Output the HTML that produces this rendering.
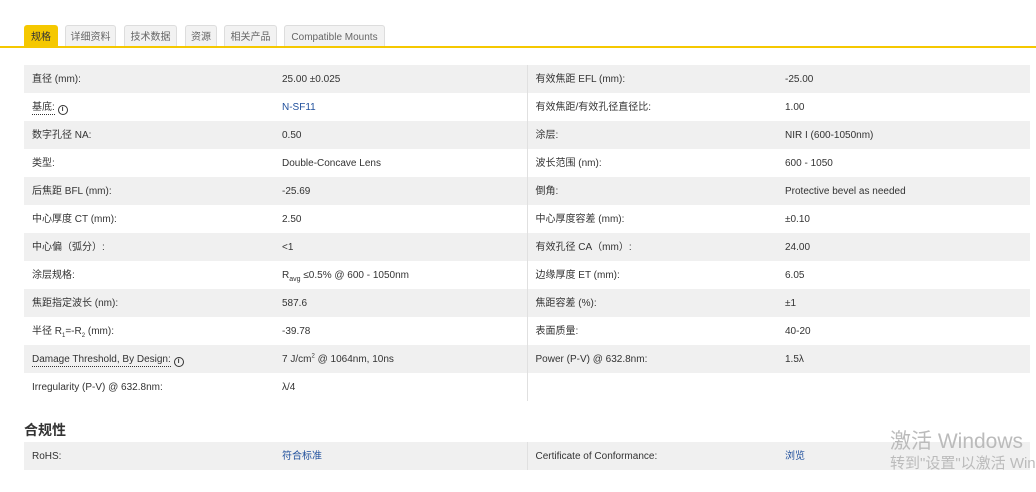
<!DOCTYPE html>
<html><head><meta charset="utf-8"><style>
body{margin:0;width:1036px;height:492px;background:#fff;font-family:"Liberation Sans","Noto Sans CJK SC",sans-serif;font-size:10px;color:#333;position:relative;overflow:hidden}
.tab{position:absolute;top:25px;height:22px;line-height:23px;background:#f2f2f2;border:1px solid #ddd;border-bottom:none;border-radius:3px 3px 0 0;color:#666;font-size:10px;text-align:center;box-sizing:border-box}
.tab.on{background:#f5c800;border-color:#f5c800;color:#333}
.line{position:absolute;left:0;top:46px;width:1036px;height:2px;background:#f5c800}
table{position:absolute;left:24px;top:65px;width:1006px;border-collapse:collapse;table-layout:fixed}
td{height:28px;padding:0 0 0 8px;line-height:28px;white-space:nowrap;overflow:hidden;box-sizing:border-box}
td>span.t{position:relative;top:1px}
sub,sup{line-height:0}
tr:nth-child(odd) td{background:#f0f0f0}
td.c1{width:250px}td.c2{width:253px;border-right:1px solid #e0e0e0}td.c3{width:250px}
.lnk{color:#1f4f9c}
.u{border-bottom:1px dotted #333;line-height:12px;display:inline-block}
.i{display:inline-block;width:8px;height:8px;border:1.3px solid #333;border-radius:50%;font-size:7px;line-height:8px;text-align:center;font-weight:bold;vertical-align:-1px}
h3{position:absolute;left:24px;top:420px;margin:0;font-size:14px;font-weight:bold;color:#333}
.wm{position:absolute;left:890px;color:#bbb;white-space:nowrap}
</style></head><body>
<div class="tab on" style="left:24px;width:34px">规格</div>
<div class="tab" style="left:65px;width:51px">详细资料</div>
<div class="tab" style="left:124px;width:53px">技术数据</div>
<div class="tab" style="left:185px;width:32px">资源</div>
<div class="tab" style="left:224px;width:53px">相关产品</div>
<div class="tab" style="left:284px;width:101px">Compatible Mounts</div>
<div class="line"></div>
<table>
<tr><td class="c1"><span class="t">直径 (mm):</span></td><td class="c2"><span class="t">25.00 ±0.025</span></td><td class="c3"><span class="t">有效焦距 EFL (mm):</span></td><td><span class="t">-25.00</span></td></tr>
<tr><td class="c1"><span class="t"><span class="u">基底:</span> <span class="i">i</span></span></td><td class="c2 lnk"><span class="t">N-SF11</span></td><td class="c3"><span class="t">有效焦距/有效孔径直径比:</span></td><td><span class="t">1.00</span></td></tr>
<tr><td class="c1"><span class="t">数字孔径 NA:</span></td><td class="c2"><span class="t">0.50</span></td><td class="c3"><span class="t">涂层:</span></td><td><span class="t">NIR I (600-1050nm)</span></td></tr>
<tr><td class="c1"><span class="t">类型:</span></td><td class="c2"><span class="t">Double-Concave Lens</span></td><td class="c3"><span class="t">波长范围 (nm):</span></td><td><span class="t">600 - 1050</span></td></tr>
<tr><td class="c1"><span class="t">后焦距 BFL (mm):</span></td><td class="c2"><span class="t">-25.69</span></td><td class="c3"><span class="t">倒角:</span></td><td><span class="t">Protective bevel as needed</span></td></tr>
<tr><td class="c1"><span class="t">中心厚度 CT (mm):</span></td><td class="c2"><span class="t">2.50</span></td><td class="c3"><span class="t">中心厚度容差 (mm):</span></td><td><span class="t">±0.10</span></td></tr>
<tr><td class="c1"><span class="t">中心偏（弧分）:</span></td><td class="c2"><span class="t">&lt;1</span></td><td class="c3"><span class="t">有效孔径 CA（mm）:</span></td><td><span class="t">24.00</span></td></tr>
<tr><td class="c1"><span class="t">涂层规格:</span></td><td class="c2"><span class="t">R<sub style="font-size:7px">avg</sub> ≤0.5% @ 600 - 1050nm</span></td><td class="c3"><span class="t">边缘厚度 ET (mm):</span></td><td><span class="t">6.05</span></td></tr>
<tr><td class="c1"><span class="t">焦距指定波长 (nm):</span></td><td class="c2"><span class="t">587.6</span></td><td class="c3"><span class="t">焦距容差 (%):</span></td><td><span class="t">±1</span></td></tr>
<tr><td class="c1"><span class="t">半径 R<sub style="font-size:6px">1</sub>=-R<sub style="font-size:6px">2</sub> (mm):</span></td><td class="c2"><span class="t">-39.78</span></td><td class="c3"><span class="t">表面质量:</span></td><td><span class="t">40-20</span></td></tr>
<tr><td class="c1"><span class="t"><span class="u">Damage Threshold, By Design:</span> <span class="i">i</span></span></td><td class="c2"><span class="t">7 J/cm<sup style="font-size:6px">2</sup> @ 1064nm, 10ns</span></td><td class="c3"><span class="t">Power (P-V) @ 632.8nm:</span></td><td><span class="t">1.5λ</span></td></tr>
<tr><td class="c1" style="background:#fff"><span class="t">Irregularity (P-V) @ 632.8nm:</span></td><td class="c2" style="background:#fff"><span class="t">λ/4</span></td><td class="c3" style="background:#fff"></td><td style="background:#fff"></td></tr>
</table>
<h3>合规性</h3>
<table style="top:442px">
<tr><td class="c1"><span class="t">RoHS:</span></td><td class="c2 lnk"><span class="t">符合标准</span></td><td class="c3"><span class="t">Certificate of Conformance:</span></td><td class="lnk"><span class="t">浏览</span></td></tr>
</table>
<div class="wm" style="top:425px;font-size:21px">激活 Windows</div>
<div class="wm" style="top:452px;font-size:15px">转到"设置"以激活 Windows。</div>
</body></html>
